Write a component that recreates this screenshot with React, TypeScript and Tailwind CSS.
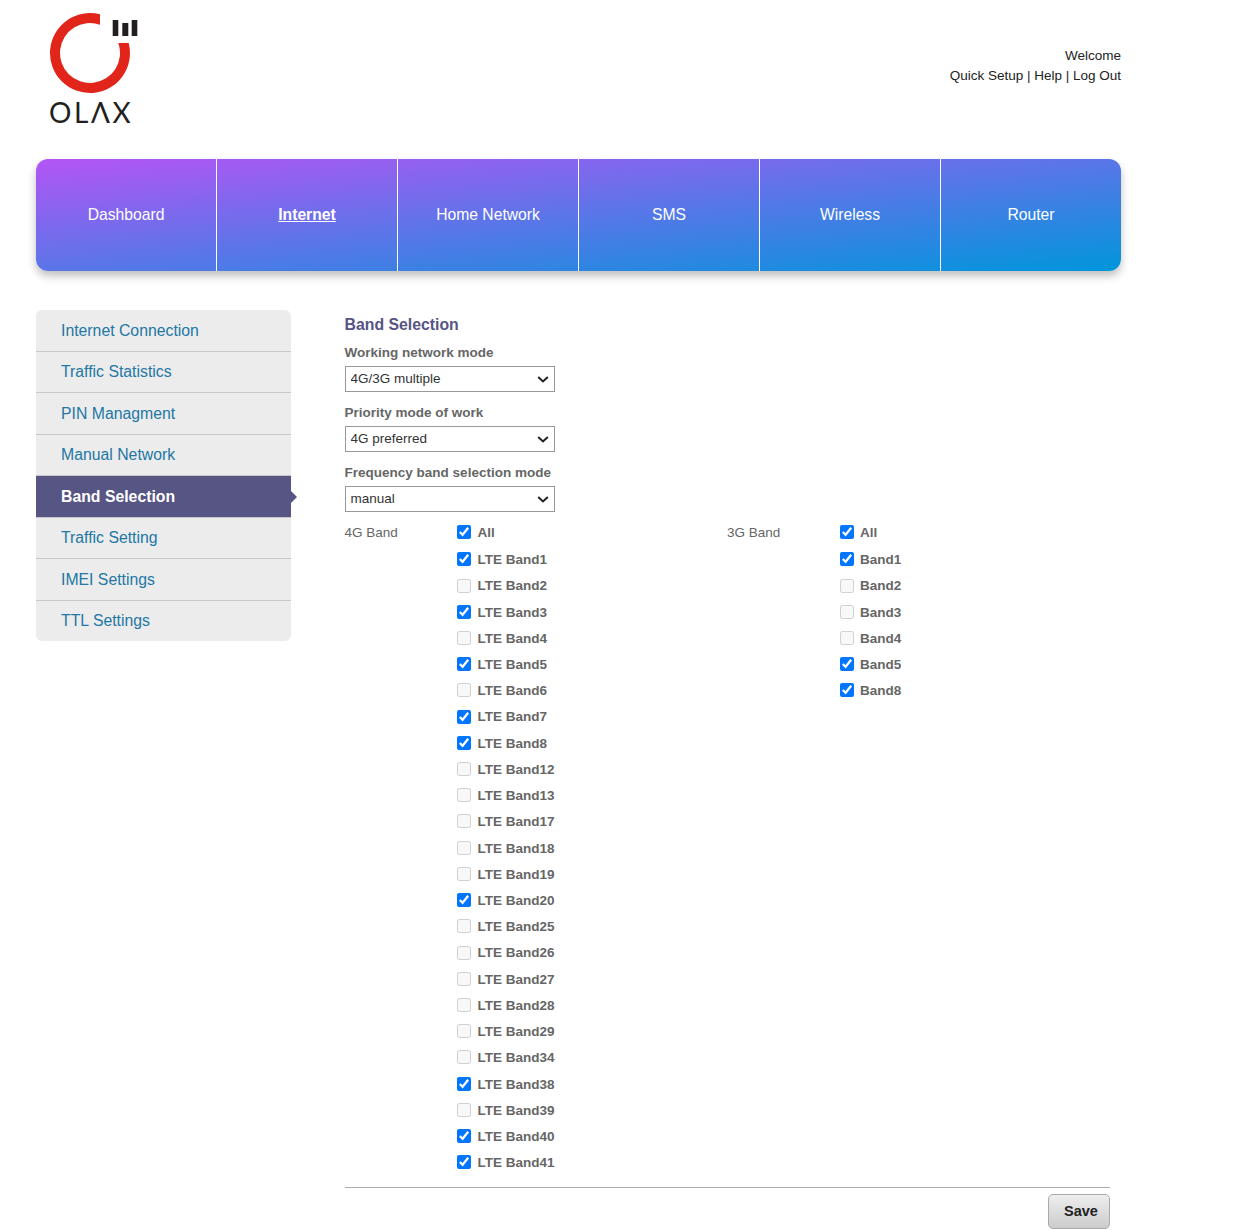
import React from 'react';

const topNav = ['Dashboard', 'Internet', 'Home Network', 'SMS', 'Wireless', 'Router'];
const sideNav = ['Internet Connection', 'Traffic Statistics', 'PIN Managment', 'Manual Network', 'Band Selection', 'Traffic Setting', 'IMEI Settings', 'TTL Settings'];

const lteBands: [string, boolean][] = [
  ['All', true], ['LTE Band1', true], ['LTE Band2', false], ['LTE Band3', true], ['LTE Band4', false],
  ['LTE Band5', true], ['LTE Band6', false], ['LTE Band7', true], ['LTE Band8', true], ['LTE Band12', false],
  ['LTE Band13', false], ['LTE Band17', false], ['LTE Band18', false], ['LTE Band19', false], ['LTE Band20', true],
  ['LTE Band25', false], ['LTE Band26', false], ['LTE Band27', false], ['LTE Band28', false], ['LTE Band29', false],
  ['LTE Band34', false], ['LTE Band38', true], ['LTE Band39', false], ['LTE Band40', true], ['LTE Band41', true],
];
const wcdmaBands: [string, boolean][] = [
  ['All', true], ['Band1', true], ['Band2', false], ['Band3', false], ['Band4', false], ['Band5', true], ['Band8', true],
];

const Logo = () => (
  <div className="w-[92px]">
    <svg width="92" height="92" viewBox="0 0 92 92" className="block">
      <path d="M52 4.3 A40 40 0 1 0 80.7 33 L70.3 33 A30 30 0 1 1 52 14.7 Z" fill="#e1251b" />
      <rect x="64.7" y="10" width="5.6" height="16" fill="#231f20" />
      <rect x="74.3" y="13" width="6" height="13" fill="#231f20" />
      <rect x="83.7" y="10" width="5.6" height="16" fill="#231f20" />
    </svg>
    <div className="mt-[-5px] pl-[1px] h-[30px] leading-[30px] text-[28px] tracking-[2.6px] text-[#231f20] font-['Lato',sans-serif] font-normal whitespace-nowrap">
      OLΛX
    </div>
  </div>
);

const Field = ({ label, value }: { label: string; value: string }) => (
  <div className="mb-[10px]">
    <label className="block h-[20px] pt-[1px] leading-[20px] text-[13.5px] font-bold text-[#666] mb-[4px]">{label}</label>
    <div className="relative w-[210px]">
      <select
        defaultValue={value}
        className="block w-full h-[26px] border border-[#999] pl-[5px] text-[13.5px] text-[#333] bg-white appearance-none"
      >
        <option>{value}</option>
      </select>
      <svg width="12" height="7" viewBox="0 0 12 7" className="absolute right-[6px] top-[10px] pointer-events-none">
        <path d="M1.2 1 L6 5.5 L10.8 1" fill="none" stroke="#222" strokeWidth="2" />
      </svg>
    </div>
  </div>
);

const BandColumn = ({ title, bands }: { title: string; bands: [string, boolean][] }) => (
  <div className="flex w-[382.5px] mt-[-3px]">
    <div className="w-[112.5px] h-[26px] pt-[1px] leading-[26px] text-[13.5px] text-[#666]">{title}</div>
    <div className="flex flex-col">
      {bands.map(([name, on], i) => (
        <label key={name} className={`flex items-center text-[13.5px] font-bold text-[#666] ${i === 0 ? 'h-[27.2px]' : 'h-[26.22px]'}`}>
          <input
            type="checkbox"
            defaultChecked={on}
            disabled={!on}
            className={`w-[14px] h-[14px] m-0 mr-[6.5px] accent-[#0075ff] ${i === 0 ? 'mb-[2px]' : ''}`}
          />
          <span className="pt-[2px]">{name}</span>
        </label>
      ))}
    </div>
  </div>
);

export default function App() {
  return (
    <div className="w-[1260px] min-h-[1230px] bg-white font-['Liberation_Sans',Arial,sans-serif] text-[13.5px] text-[#333] overflow-hidden">
      <div className="w-[1085px] ml-[36px]">
        {/* Header */}
        <header className="h-[159px] flex justify-between">
          <div className="pt-[10px] pl-[12px]">
            <Logo />
          </div>
          <div className="pt-[46px] text-right leading-[20px] text-[#222]">
            <div>Welcome</div>
            <div>Quick Setup | Help | Log Out</div>
          </div>
        </header>

        {/* Top nav */}
        <nav className="h-[112px] flex rounded-[12px] bg-[linear-gradient(to_bottom_right,#b455f5,#0096db)] shadow-[0_5px_8px_rgba(0,0,0,0.25)]">
          {topNav.map((item, i) => (
            <a
              key={item}
              className={`flex-1 flex items-center justify-center text-[15.7px] text-white ${i < 5 ? 'border-r border-white' : ''} ${item === 'Internet' ? 'font-bold underline' : ''}`}
            >
              {item}
            </a>
          ))}
        </nav>

        <div className="flex mt-[39px]">
          {/* Side nav */}
          <aside className="w-[255px] shrink-0 self-start">
            <ul className="rounded-[6px] bg-[#ececec]">
              {sideNav.map((item, i) => {
                const active = item === 'Band Selection';
                return (
                  <li
                    key={item}
                    className={`relative pl-[25px] text-[15.8px] ${i % 2 === 0 ? 'leading-[41px]' : 'leading-[40px]'} ${i < 7 ? 'h-[41.5px] border-b border-[#c8c8c8]' : 'h-[40.5px]'} ${active ? 'bg-[#565584] text-white font-bold' : 'text-[#2277a5]'}`}
                  >
                    {item}
                    {active && (
                      <span className="absolute right-[-6px] top-[15px] w-0 h-0 border-y-[6px] border-y-transparent border-l-[6px] border-l-[#565584]" />
                    )}
                  </li>
                );
              })}
            </ul>
          </aside>

          {/* Main */}
          <main className="ml-[53.6px] w-[765.4px]">
            <h2 className="h-[26px] mt-[2px] leading-[26px] text-[15.8px] font-bold text-[#565584] mb-[4px]">Band Selection</h2>
            <Field label="Working network mode" value="4G/3G multiple" />
            <Field label="Priority mode of work" value="4G preferred" />
            <Field label="Frequency band selection mode" value="manual" />
            <div className="flex">
              <BandColumn title="4G Band" bands={lteBands} />
              <BandColumn title="3G Band" bands={wcdmaBands} />
            </div>
            <div className="mt-[12px] pt-[6px] border-t border-[#aaa] flex justify-end">
              <button className="w-[62px] h-[35px] pl-[4px] rounded-[5px] border border-[#aaa] bg-[linear-gradient(to_bottom,#eee,#ccc)] text-[14.5px] font-bold text-[#222]">
                Save
              </button>
            </div>
          </main>
        </div>
      </div>
    </div>
  );
}
